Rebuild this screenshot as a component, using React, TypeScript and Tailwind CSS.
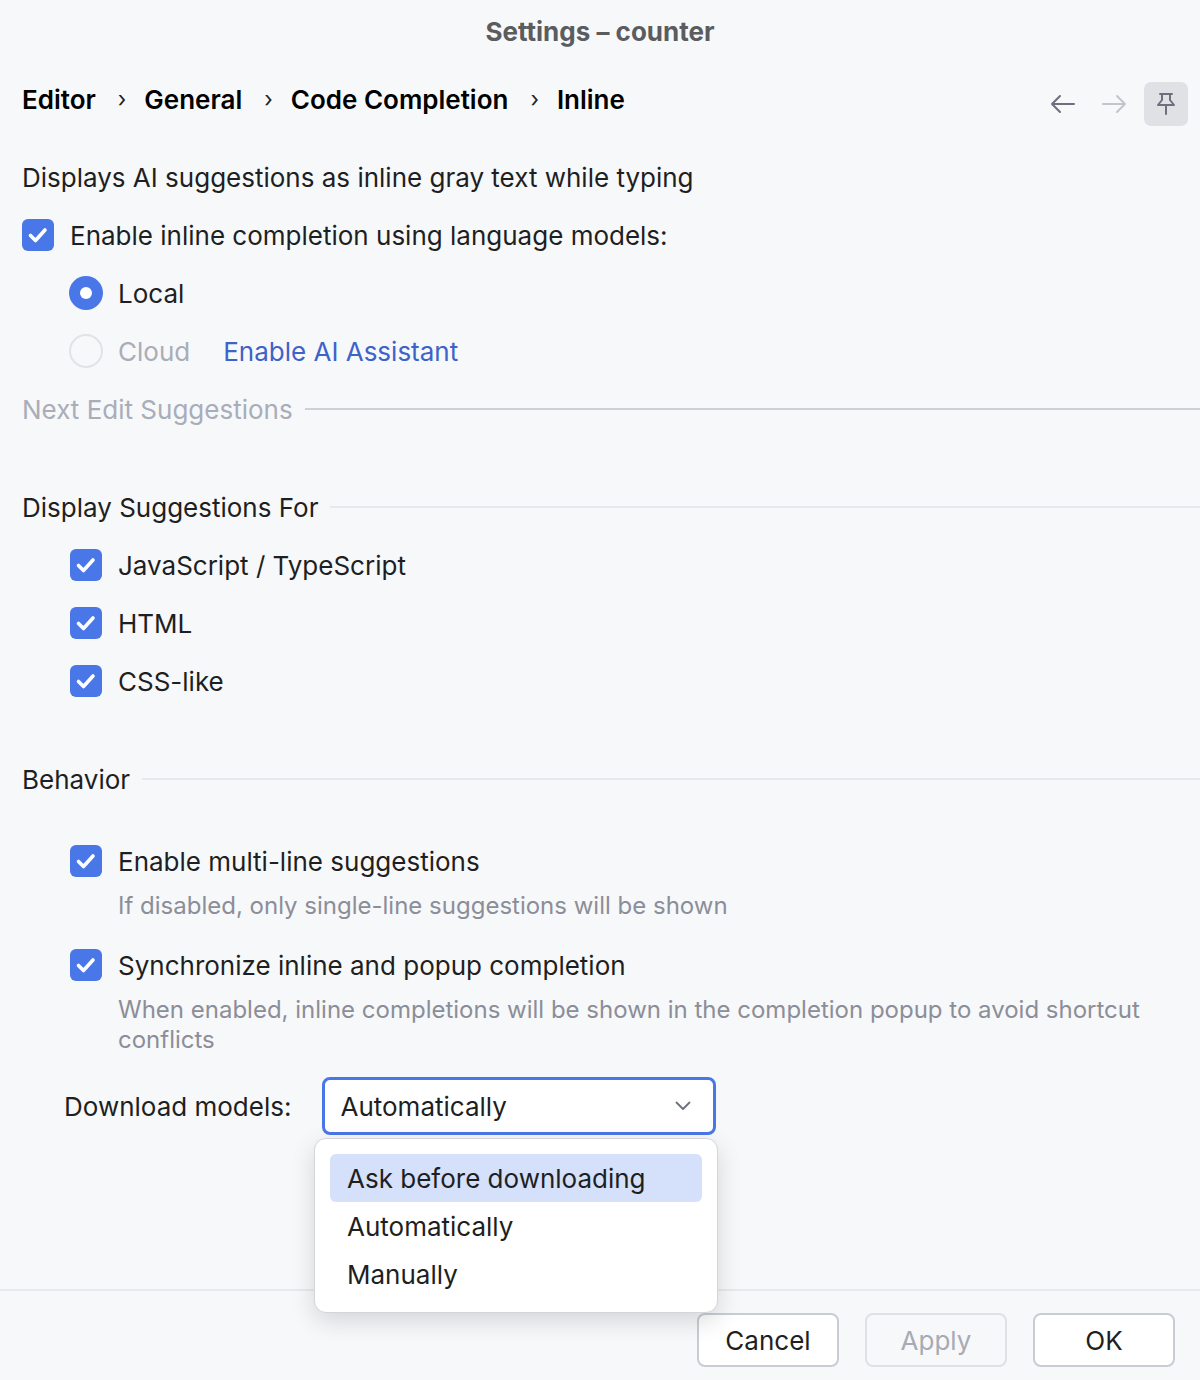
import { ReactNode } from "react";

const Check = ({ on = true }: { on?: boolean }) => (
  <span
    className={`flex h-[32px] w-[32px] shrink-0 items-center justify-center rounded-[6px] ${
      on ? "bg-[#4a77e7]" : "border-2 border-[#c4c7cf] bg-white"
    }`}
  >
    {on && (
      <svg width="32" height="32" viewBox="0 0 32 32" fill="none">
        <path
          d="M8.5 16.5 L13.5 21.5 L23 11"
          stroke="white"
          strokeWidth="3.6"
          strokeLinecap="round"
          strokeLinejoin="round"
        />
      </svg>
    )}
  </span>
);

const Radio = ({ on, disabled }: { on?: boolean; disabled?: boolean }) =>
  on ? (
    <span className="flex h-[34px] w-[34px] shrink-0 items-center justify-center rounded-full bg-[#4a77e7]">
      <span className="h-[12px] w-[12px] rounded-full bg-white" />
    </span>
  ) : (
    <span
      className={`h-[34px] w-[34px] shrink-0 rounded-full border-2 ${
        disabled ? "border-[#e1e3e7] bg-[#f7f8fa]" : "border-[#c4c7cf] bg-white"
      }`}
    />
  );

const Row = ({ children, className = "" }: { children: ReactNode; className?: string }) => (
  <div className={`flex h-[58px] items-center ${className}`}>{children}</div>
);

const Group = ({
  title,
  dim,
  className = "",
}: {
  title: string;
  dim?: boolean;
  className?: string;
}) => (
  <Row className={className}>
    <span className={dim ? "text-[#a9adb8]" : "text-[#1e1f22]"}>{title}</span>
    <span className={`ml-[12px] h-[2px] flex-1 ${dim ? "bg-[#cdd0d6]" : "bg-[#e8e9ec]"}`} />
  </Row>
);

const CheckItem = ({ label }: { label: string }) => (
  <Row className="pl-[48px]">
    <Check />
    <span className="ml-[16px]">{label}</span>
  </Row>
);

const Chevron = () => (
  <span className="ml-[22px] mr-[18px] text-[22px] font-normal text-[#1e1f22]">›</span>
);

const downloadOptions = ["Ask before downloading", "Automatically", "Manually"];

export default function App() {
  return (
    <div className="relative flex h-[1380px] w-[1200px] flex-col overflow-hidden bg-[#f7f8fa] font-['Inter',sans-serif] text-[26px] text-[#1e1f22]">
      {/* window title */}
      <div className="flex h-[62px] items-center justify-center font-bold text-[#5b5c5e]">
        Settings – counter
      </div>

      {/* breadcrumb + nav */}
      <div className="mt-[20px] flex h-[44px] items-center pl-[22px] pr-[12px]">
        <div className="mb-[10px] flex items-center font-semibold text-black">
          <span>Editor</span>
          <Chevron />
          <span>General</span>
          <Chevron />
          <span>Code Completion</span>
          <Chevron />
          <span>Inline</span>
        </div>
        <div className="ml-auto flex items-center">
          <svg width="28" height="28" viewBox="0 0 28 28" fill="none" className="mr-[23px]">
            <path d="M25 14H3M11 6l-8 8 8 8" stroke="#6c707e" strokeWidth="2" strokeLinecap="round" strokeLinejoin="round" />
          </svg>
          <svg width="28" height="28" viewBox="0 0 28 28" fill="none" className="mr-[16px]">
            <path d="M3 14h22M17 6l8 8-8 8" stroke="#c3c5cb" strokeWidth="2" strokeLinecap="round" strokeLinejoin="round" />
          </svg>
          <button className="flex h-[44px] w-[44px] items-center justify-center rounded-[7px] bg-[#dfe1e5]">
            <svg width="26" height="26" viewBox="0 0 26 26" fill="none">
              <path
                d="M7 3h12M9 3v6l-4 5h16l-4-5V3M13 14v9"
                stroke="#6c707e"
                strokeWidth="2"
                strokeLinecap="round"
                strokeLinejoin="round"
              />
            </svg>
          </button>
        </div>
      </div>

      {/* settings body */}
      <div className="mt-[22px] flex flex-1 flex-col pl-[22px]">
        <Row>Displays AI suggestions as inline gray text while typing</Row>
        <Row>
          <Check />
          <span className="ml-[16px]">Enable inline completion using language models:</span>
        </Row>
        <Row className="pl-[47px]">
          <Radio on />
          <span className="ml-[15px]">Local</span>
        </Row>
        <Row className="pl-[47px]">
          <Radio disabled />
          <span className="ml-[15px] text-[#a9adb8]">Cloud</span>
          <span className="ml-[33px] text-[#3d63c9]">Enable AI Assistant</span>
        </Row>
        <Group title="Next Edit Suggestions" dim />

        <Group title="Display Suggestions For" className="mt-[40px]" />
        <CheckItem label="JavaScript / TypeScript" />
        <CheckItem label="HTML" />
        <CheckItem label="CSS-like" />

        <Group title="Behavior" className="mt-[40px]" />
        <div className="mt-[24px]">
          <CheckItem label="Enable multi-line suggestions" />
          <p className="mt-[1px] pl-[96px] text-[24px] leading-[30px] text-[#8b8e98]">
            If disabled, only single-line suggestions will be shown
          </p>
        </div>
        <div className="mt-[15px]">
          <CheckItem label="Synchronize inline and popup completion" />
          <p className="mt-[1px] pl-[96px] pr-[50px] text-[24px] leading-[30px] text-[#8b8e98]">
            When enabled, inline completions will be shown in the completion popup to avoid shortcut conflicts
          </p>
        </div>

        <div className="mt-[22px] flex items-center pl-[42px]">
          <span>Download models:</span>
          <div className="ml-[31px] flex h-[58px] w-[394px] items-center rounded-[8px] border-[3px] border-[#4a77e7] bg-white pl-[15px] pr-[22px]">
            <span>Automatically</span>
            <svg width="16" height="10" viewBox="0 0 16 10" fill="none" className="ml-auto">
              <path d="M1.5 1.5l6.5 6.5 6.5-6.5" stroke="#6c707e" strokeWidth="1.8" strokeLinecap="round" strokeLinejoin="round" />
            </svg>
          </div>
        </div>
      </div>

      {/* footer buttons */}
      <div className="flex justify-end gap-[26px] border-t-2 border-[#e8e9ec] pt-[22px] pb-[13px] pr-[25px]">
        <button className="h-[54px] w-[142px] rounded-[8px] border-2 border-[#c9ccd3] bg-white text-[#1e1f22]">
          Cancel
        </button>
        <button className="h-[54px] w-[142px] rounded-[8px] border-2 border-[#dfe1e5] text-[#a8abb3]">
          Apply
        </button>
        <button className="h-[54px] w-[142px] rounded-[8px] border-2 border-[#c9ccd3] bg-white text-[#1e1f22]">
          OK
        </button>
      </div>

      {/* open dropdown list */}
      <div className="absolute left-[314px] top-[1138px] w-[404px] rounded-[12px] border border-[#d3d5db] bg-white px-[15px] pt-[15px] pb-[14px] shadow-[0_8px_24px_rgba(0,0,0,0.14)]">
        {downloadOptions.map((o, i) => (
          <div
            key={o}
            className={`flex h-[48px] items-center rounded-[6px] pl-[17px] ${i === 0 ? "bg-[#d5e0fb]" : ""}`}
          >
            {o}
          </div>
        ))}
      </div>
    </div>
  );
}
